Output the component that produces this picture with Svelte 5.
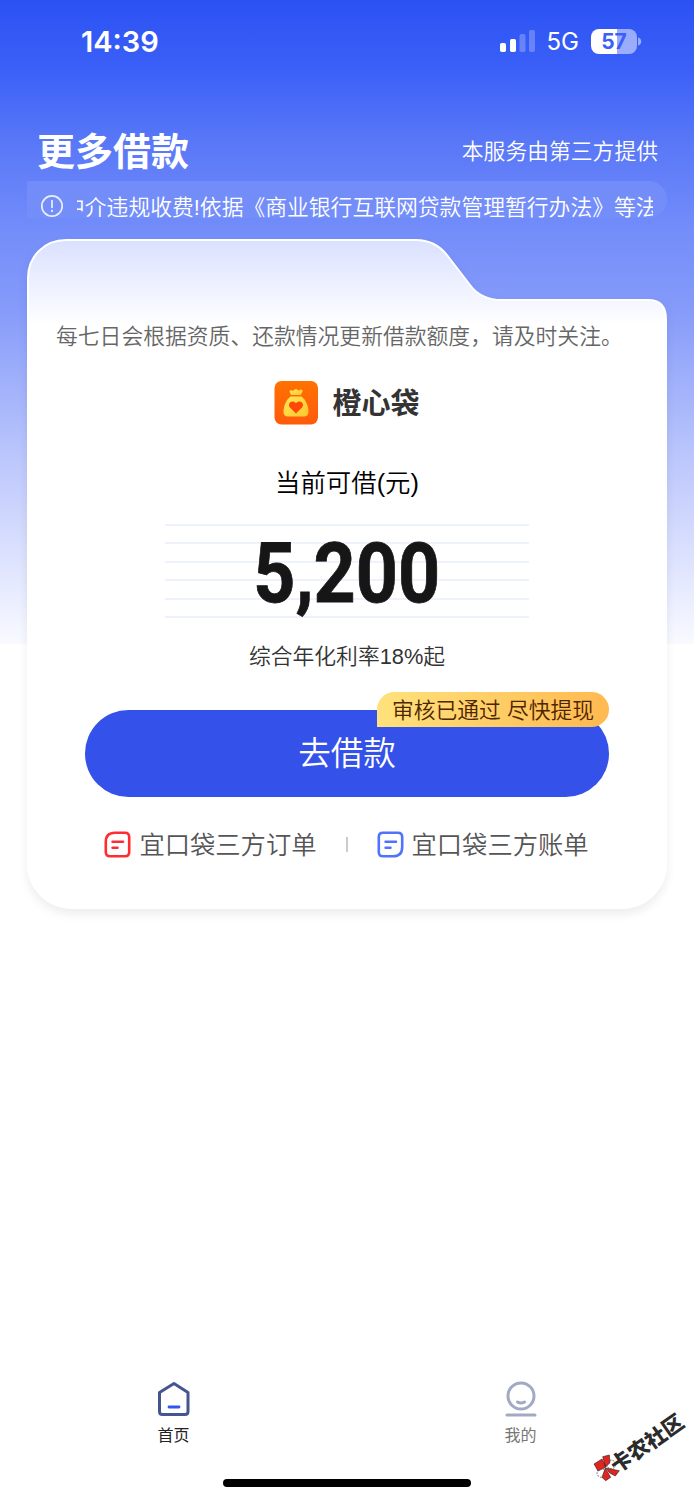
<script>
  const links = [
    { label: '宜口袋三方订单', kind: 'order', color: '#ff2d2f' },
    { label: '宜口袋三方账单', kind: 'bill', color: '#4f74fb' }
  ]
  const lines = [1, 2, 3, 4, 5, 6]
</script>

<div class="page">
  <div class="statusbar">
    <span class="time">14:39</span>
    <div class="status-right">
      <svg class="signal" width="36" height="23" viewBox="0 0 36 23" fill="#fff">
        <rect x="0" y="13" width="6" height="9" rx="1.7" />
        <rect x="10" y="9" width="6" height="13" rx="1.7" />
        <rect x="19.5" y="4" width="6" height="18" rx="1.7" opacity=".25" />
        <rect x="29" y="0" width="6" height="22" rx="1.7" opacity=".25" />
      </svg>
      <span class="net">5G</span>
      <div class="battery"><span>57</span></div>
      <svg class="cap" width="4" height="9" viewBox="0 0 4 9"><path d="M0 .5C4.4 1.5 4.4 7.5 0 8.5Z" fill="#fff" opacity=".5" /></svg>
    </div>
  </div>

  <header>
    <h1>更多借款</h1>
    <span class="provider">本服务由第三方提供</span>
  </header>

  <div class="notice">
    <svg width="24" height="24" viewBox="0 0 24 24" fill="none" stroke="#fff" stroke-width="1.7">
      <circle cx="12" cy="12" r="10.2" />
      <path d="M12 6v8M12 15.7v2.2" />
    </svg>
    <div class="marquee"><span>中介违规收费!依据《商业银行互联网贷款管理暂行办法》等法</span></div>
  </div>

  <main class="card">
    <svg class="card-bg" width="640" height="670" viewBox="0 0 640 670">
      <defs>
        <linearGradient id="tab" x1="0" y1="0" x2="0" y2="86" gradientUnits="userSpaceOnUse">
          <stop offset="0" stop-color="#d9e0ff" />
          <stop offset="1" stop-color="#fff" />
        </linearGradient>
      </defs>
      <path
        d="M1 39C1 17 18 1 39 1H389Q408 1 420 16L443 46Q454 61 475 61H621Q639 61 639 80V625A44 44 0 0 1 595 669H45A44 44 0 0 1 1 625Z"
        fill="url(#tab)" stroke="#fff" stroke-width="2" />
    </svg>

    <div class="card-body">
      <p class="tip">每七日会根据资质、还款情况更新借款额度，请及时关注。</p>

      <div class="brand">
        <svg width="44" height="44" viewBox="0 0 44 44">
          <defs>
            <linearGradient id="orange" x1="0" y1="0" x2="0" y2="1">
              <stop offset="0" stop-color="#ff7200" />
              <stop offset="1" stop-color="#ff5a0c" />
            </linearGradient>
            <linearGradient id="gold" x1="0" y1="0" x2="1" y2="1">
              <stop offset="0" stop-color="#ffe95b" />
              <stop offset="1" stop-color="#ffc52c" />
            </linearGradient>
          </defs>
          <rect x=".5" y="0" width="43.500" height="43.500" rx="7" fill="url(#orange)" />
          <path d="M17 14L15.600 10.800Q15.500 8.900 17.800 9.500Q19 10.300 20.200 8.700Q22 7.200 23.600 8.700Q25 10.300 26.500 8.500Q28.700 7.900 28.700 10.200L26.800 14Z" fill="url(#gold)" />
          <path d="M16.500 15.500H27.500C32 19 34.500 25 34.500 31.500Q34 35.500 30 35.500H14Q10 35.500 9.500 31.500C9.500 25 12 19 16.500 15.500Z" fill="url(#gold)" />
          <path d="M22 32.500L15.900 26.500C14 24.300 15.300 20.500 18.300 20.500Q20.700 20.300 22 22.200Q23.300 20.300 25.700 20.500C28.700 20.500 30 24.300 28.100 26.500Z" fill="#ff4706" />
        </svg>
        <strong>橙心袋</strong>
      </div>

      <p class="label">当前可借(元)</p>

      <div class="amount">
        <div class="rules">
          {#each lines as line (line)}
            <i></i>
          {/each}
        </div>
        <span class="value">5,200</span>
      </div>

      <p class="rate">综合年化利率18%起</p>

      <div class="action">
        <button>去借款</button>
        <span class="badge">审核已通过 尽快提现</span>
      </div>

      <div class="links">
        {#each links as link, i}
          {#if i > 0}<span class="divider"></span>{/if}
          <a href="#{link.kind}">
            <svg width="27" height="27" viewBox="0 0 27 27" fill="none" stroke={link.color} stroke-width="2.6" stroke-linecap="round">
              {#if link.kind === 'order'}
                <path d="M11 1.700H21Q25.200 1.700 25.200 6V21Q25.200 25.300 21 25.300H6Q1.800 25.300 1.800 21V11Q1.800 1.700 11 1.700Z" />
              {:else}
                <path d="M6 1.700H21Q25.200 1.700 25.200 6V16Q25.200 25.300 16 25.300H6Q1.800 25.300 1.800 21V6Q1.800 1.700 6 1.700Z" />
              {/if}
              <path d="M8.600 10.800H19M8.600 16.800H13.500" />
            </svg>
            <span>{link.label}</span>
          </a>
        {/each}
      </div>
    </div>
  </main>

  <nav>
    <div class="tab active">
      <svg width="36" height="38" viewBox="0 0 36 38" fill="none" stroke="#46558f" stroke-width="3" stroke-linejoin="round" stroke-linecap="round">
        <path d="M3.500 12.500L18 3.500L32 12.500V31.500Q32 34.500 29 34.500H6.500Q3.500 34.500 3.500 31.500Z" />
        <path d="M13 27H23" stroke="#2f55f3" stroke-width="2.800" />
      </svg>
      <span>首页</span>
    </div>
    <div class="tab">
      <svg width="36" height="38" viewBox="0 0 36 38" fill="none" stroke="#a2a9c4" stroke-width="3" stroke-linecap="round">
        <circle cx="18" cy="16" r="13" />
        <path d="M14.500 22Q18 24.100 21.500 22" />
        <path d="M4 35H32" />
      </svg>
      <span>我的</span>
    </div>
  </nav>

  <div class="home-indicator"></div>

  <div class="watermark">
    <svg width="28" height="28" viewBox="0 0 28 28" stroke="#222" stroke-width=".6">
      <circle cx="18.300" cy="10.500" r="4.300" fill="#fff" stroke-dasharray="2 1" />
      <circle cx="8.300" cy="19" r="4.300" fill="#fff" stroke-dasharray="2 1" />
      <path d="M1 10L9 5L13 13L5 17ZM9.700 2.700L16.300 1L17 8.700L12.500 13ZM13 14L26.300 16.700L22.300 22L16.300 18.700ZM12.300 14L17.700 23.300L12.700 26.700L9 23.300Z" fill="#e02420" />
    </svg>
    <span>卡农社区</span>
  </div>
</div>

<style>
  :global(body) { margin: 0; }
  .page {
    position: relative; display: flex; flex-direction: column;
    width: 694px; height: 1500px; overflow: hidden;
    font-family: "Liberation Sans", "Noto Sans CJK SC", sans-serif; font-weight: 350;
    background: linear-gradient(180deg, #2b51f3 0, #3c61f8 72px, #5877f7 140px, #738dfa 230px, #869bfa 310px, #bcc7fc 460px, #f9faff 644px, #fff 644px);
  }
  p, h1 { margin: 0; }

  .statusbar {
    display: flex; justify-content: space-between; align-items: center;
    height: 82px; padding: 0 52px 0 81px; box-sizing: border-box; color: #fff;
    font-family: Inter, "Liberation Sans", sans-serif;
  }
  .time { font-size: 29px; font-weight: 600; }
  .status-right { display: flex; align-items: center; }
  .net { margin-left: 11px; font-size: 24px; font-weight: 400; line-height: 30px; padding-top: 1px; }
  .battery {
    width: 46px; height: 25px; margin-left: 12px; border-radius: 8px;
    background: linear-gradient(90deg, #fff 57%, rgba(255, 255, 255, .5) 57%);
    color: #3c60f5; font-size: 21px; font-weight: 700; line-height: 25px; text-align: center;
  }
  .cap { margin-left: 1px; }

  header {
    display: flex; justify-content: space-between; align-items: center;
    height: 99px; padding: 41px 36px 0 37px; box-sizing: border-box; color: #fff;
  }
  h1 { font-size: 38px; font-weight: 700; line-height: 60px; }
  .provider { font-size: 21.8px; line-height: 58px; }

  .notice {
    display: flex; align-items: center; height: 37px; margin: 0 27px; padding: 13px 14px 0 13px;
    box-sizing: border-box; border-radius: 0 19px 19px 0; color: #fff;
    background: linear-gradient(rgba(255, 255, 255, .09), rgba(255, 255, 255, .03));
  }
  .notice svg { flex-shrink: 0; opacity: .85; }
  .marquee { flex: 1; margin-left: 13px; height: 34px; overflow: hidden; white-space: nowrap; font-size: 21.8px; line-height: 38px; }
  .marquee span { margin-left: -14px; }

  .card { display: grid; width: 640px; height: 670px; margin: 21px 27px 0; }
  .card-bg { grid-area: 1 / 1; overflow: visible; filter: drop-shadow(0 5px 5px rgba(0, 0, 0, .07)); }
  .card-body { grid-area: 1 / 1; z-index: 1; display: flex; flex-direction: column; align-items: center; }
  .tip { width: 582px; margin-top: 82px; font-size: 21.8px; line-height: 32px; color: #666; white-space: nowrap; }
  .brand { display: flex; align-items: center; gap: 14px; height: 44px; margin-top: 28px; }
  .brand strong { font-size: 29px; font-weight: 700; line-height: 44px; padding-top: 2px; color: #333; }
  .label { margin-top: 39px; font-size: 25.4px; line-height: 38px; color: #000; }
  .amount { display: grid; grid-template-rows: 94px; width: 364px; height: 94px; margin-top: 22px; }
  .rules { grid-area: 1 / 1; display: flex; flex-direction: column; justify-content: space-between; }
  .rules i { height: 2px; background: #eef2fe; }
  .value {
    grid-area: 1 / 1; z-index: 1; justify-self: center; font-family: Roboto, sans-serif;
    font-size: 84px; font-weight: 700; line-height: 99px; color: #161616; transform: scaleX(.875);
    -webkit-text-stroke: .8px #161616;
  }
  .rate { margin-top: 22px; font-size: 21.8px; line-height: 34px; color: #333; }
  .action { position: relative; width: 524px; height: 87px; margin-top: 36px; }
  button {
    width: 100%; height: 100%; padding: 0; border: 0; border-radius: 44px; background: #3451e9;
    color: #fff; font: inherit; font-size: 32.6px; line-height: 84px;
  }
  .badge {
    position: absolute; top: -18px; right: 0; width: 232px; height: 35px; border-radius: 18px 18px 18px 0;
    background: linear-gradient(90deg, #ffe27c, #ffb950); color: #4d2500;
    font-size: 21.8px; line-height: 38px; text-align: center; white-space: nowrap;
  }
  .links { display: flex; align-items: center; margin: 27px 1px 0 0; }
  .links a { display: flex; align-items: center; gap: 8px; color: #555; text-decoration: none; font-size: 25.3px; line-height: 40px; }
  .links a span { padding-top: 2px; line-height: 38px; }
  .divider { width: 2px; height: 15px; margin: 0 29px; background: #ccc; }

  nav { display: flex; margin-top: 471px; }
  .tab { display: flex; flex: 1; flex-direction: column; align-items: center; font-size: 16px; font-weight: 400; line-height: 24px; color: #777; }
  .tab span { margin-top: 6px; }
  .tab.active { color: #222; }
  .home-indicator { width: 248px; height: 8px; margin: 31px auto 0; border-radius: 4px; background: #000; }

  .watermark {
    position: absolute; left: 593px; top: 1454px; display: flex; align-items: center;
  }
  .watermark span {
    margin-left: -8px; font-size: 21px; font-weight: 900; line-height: 22px; color: #2b2b2b;
    white-space: nowrap; transform: rotate(-35deg); transform-origin: 0 50%;
  }
</style>
